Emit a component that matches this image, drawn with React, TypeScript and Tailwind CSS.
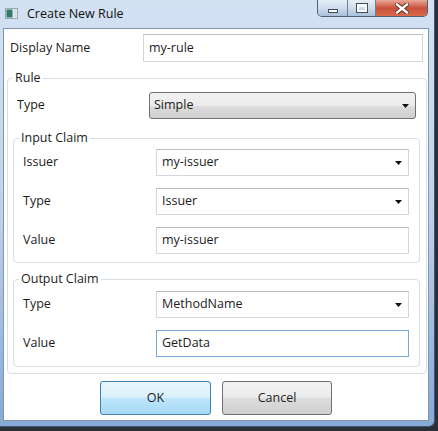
import type { ReactNode } from "react";

const font = { fontFamily: '"Open Sans", "Noto Sans", "Liberation Sans", sans-serif' };

function Arrow() {
  return (
    <svg width="7" height="4" viewBox="0 0 7 4" className="ml-auto mr-[6px] shrink-0">
      <path d="M0 0 H7 L3.5 4 Z" fill="#111" />
    </svg>
  );
}

function TextBox({ value, w, focused }: { value: string; w: string; focused?: boolean }) {
  return (
    <div
      className={`${w} h-[27px] flex items-center pl-[5px] bg-white border ${
        focused ? "border-[#7aa7da]" : "border-[#d3d6dc] border-t-[#b9bcc2]"
      } text-[12.5px] text-[#1c1c1c]`}
    >
      {value}
    </div>
  );
}

function Combo({ value, w }: { value: string; w: string }) {
  return (
    <div className={`${w} h-[27px] flex items-center pl-[5px] bg-white border border-[#d3d6dc] border-t-[#b9bcc2] text-[12.5px] text-[#1c1c1c]`}>
      {value}
      <Arrow />
    </div>
  );
}

function Row({ label, pl, lw, children }: { label: string; pl: string; lw: string; children: ReactNode }) {
  return (
    <div className={`flex items-center ${pl}`}>
      <div className={`${lw} text-[12.5px] text-[#1c1c1c]`}>{label}</div>
      {children}
    </div>
  );
}

function Group({ title, className, children }: { title: string; className: string; children: ReactNode }) {
  return (
    <fieldset className={`border border-[#d5dfe5] rounded-[4px] ${className}`}>
      <legend className="ml-[5px] px-[2px] text-[12.5px] leading-[16px] text-[#1c1c1c]">{title}</legend>
      {children}
    </fieldset>
  );
}

function CaptionButtons() {
  return (
    <div className="ml-auto mr-[6px] flex h-[17px] border border-t-0 border-[#4e5f78] rounded-b-[5px] overflow-hidden">
      <div className="w-[30px] h-full bg-gradient-to-b from-[#e6eef7] via-[#cfdcec] to-[#a9bed9] border-r border-[#6a7c96] flex items-end justify-center pb-[3px]">
        <div className="w-[10px] h-[4px] bg-white border border-[#3d4a5c]" />
      </div>
      <div className="w-[28px] h-full bg-gradient-to-b from-[#e6eef7] via-[#cfdcec] to-[#a9bed9] border-r border-[#6a7c96] flex items-center justify-center">
        <div className="w-[10px] h-[8px] border-[2px] border-t-[3px] border-white outline outline-1 outline-[#3d4a5c]" />
      </div>
      <div className="w-[51px] h-full bg-gradient-to-b from-[#e9a898] via-[#c9513a] to-[#d96a4a] flex items-center justify-center">
        <svg width="14" height="11" viewBox="0 0 14 11">
          <path d="M2 1.5 L12 9.5 M12 1.5 L2 9.5" stroke="#5b2418" strokeWidth="4.2" strokeLinecap="square" />
          <path d="M2 1.5 L12 9.5 M12 1.5 L2 9.5" stroke="#fff" strokeWidth="2.4" strokeLinecap="square" />
        </svg>
      </div>
    </div>
  );
}

export default function App() {
  return (
    <div className="w-[438px] h-[431px] bg-[#2b3038] overflow-hidden" style={font}>
      <div className="w-[435px] h-[427px] flex flex-col bg-gradient-to-b from-[#d3e2f3] via-[#bcd2ec] to-[#86a9d8] border-r border-b border-[#44546b] rounded-br-[6px]">
        <div className="h-[28px] flex items-start">
          <svg width="13" height="11" viewBox="0 0 13 11" className="mt-[8px] ml-[5px]">
            <rect x="0.5" y="0.5" width="12" height="10" fill="#e8edf2" stroke="#9aa6b2" />
            <rect x="1.5" y="1.5" width="6" height="8" fill="#2f7b6a" />
            <rect x="8.5" y="1.5" width="3" height="8" fill="#d8dee6" />
          </svg>
          <div className="ml-[9px] mt-[5px] text-[12.5px] text-[#111]">Create New Rule</div>
          <CaptionButtons />
        </div>
        <div className="ml-[3px] w-[426px] h-[393px] bg-white border border-[#8596ab] flex flex-col">
          <div className="mt-[5px]">
            <Row label="Display Name" pl="pl-[6px]" lw="w-[133px]">
              <TextBox value="my-rule" w="w-[280px] h-[28px]" />
            </Row>
          </div>
          <Group title="Rule" className="ml-[3px] w-[420px] mt-[8px]">
            <div className="pt-[6px] pb-[6px]">
              <Row label="Type" pl="pl-[9px]" lw="w-[132px]">
                <div className="w-[267px] h-[27px] flex items-center pl-[4px] rounded-[3px] border border-[#707070] bg-[linear-gradient(#f2f2f2_0%,#ebebeb_50%,#dddddd_50%,#cfcfcf_100%)] text-[12.5px] text-[#1c1c1c]">
                  Simple
                  <Arrow />
                </div>
              </Row>
              <Group title="Input Claim" className="ml-[5px] w-[407px] mt-[11px]">
                <div className="pt-[3px] pb-[8px] flex flex-col gap-[12px]">
                  <Row label="Issuer" pl="pl-[9px]" lw="w-[133px]">
                    <Combo value="my-issuer" w="w-[253px]" />
                  </Row>
                  <Row label="Type" pl="pl-[9px]" lw="w-[133px]">
                    <Combo value="Issuer" w="w-[253px]" />
                  </Row>
                  <Row label="Value" pl="pl-[9px]" lw="w-[133px]">
                    <TextBox value="my-issuer" w="w-[253px]" />
                  </Row>
                </div>
              </Group>
              <Group title="Output Claim" className="ml-[5px] w-[407px] mt-[8px]">
                <div className="pt-[4px] pb-[9px] flex flex-col gap-[12px]">
                  <Row label="Type" pl="pl-[9px]" lw="w-[133px]">
                    <Combo value="MethodName" w="w-[253px]" />
                  </Row>
                  <Row label="Value" pl="pl-[9px]" lw="w-[133px]">
                    <TextBox value="GetData" w="w-[253px]" focused />
                  </Row>
                </div>
              </Group>
            </div>
          </Group>
          <div className="mt-[7px] flex justify-center gap-[11px]">
            <div className="w-[111px] h-[34px] flex items-center justify-center rounded-[3px] border border-[#3c7fb1] bg-[linear-gradient(#eaf6fd_0%,#d9f0fc_50%,#bee6fd_50%,#a7d9f5_100%)] text-[12.5px] text-[#1c1c1c]">
              OK
            </div>
            <div className="w-[110px] h-[34px] flex items-center justify-center rounded-[3px] border border-[#707070] bg-[linear-gradient(#f2f2f2_0%,#ebebeb_50%,#dddddd_50%,#cfcfcf_100%)] text-[12.5px] text-[#1c1c1c]">
              Cancel
            </div>
          </div>
        </div>
      </div>
    </div>
  );
}
